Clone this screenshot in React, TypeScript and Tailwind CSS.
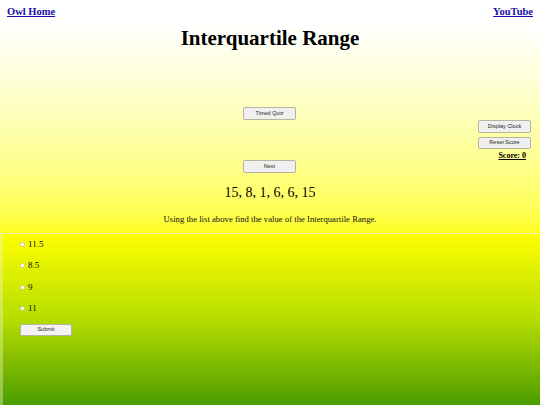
import React from 'react';

const serif = { fontFamily: '"Liberation Serif", "Times New Roman", serif' };

function QuizButton({ label }: { label: string }) {
  return (
    <button className="w-[53px] h-[13px] bg-[#f0f0f0] border border-[#b4b4a0] rounded-[2px] text-[5.5px] leading-none text-[#222] font-['Liberation_Sans',Arial,sans-serif]">
      {label}
    </button>
  );
}

export default function App() {
  const options = ['11.5', '8.5', '9', '11'];

  return (
    <div className="w-[540px] h-[405px] flex flex-col bg-white overflow-hidden" style={serif}>
      {/* Header links */}
      <div className="h-[25px] flex justify-between items-start px-[7px] pt-[7px] bg-white">
        <a href="#" className="text-[10.5px] font-bold underline text-[#1a0dab] leading-none">Owl Home</a>
        <a href="#" className="text-[10.5px] font-bold underline text-[#1a0dab] leading-none">YouTube</a>
      </div>

      {/* Question area */}
      <div className="h-[208px] flex flex-col bg-gradient-to-b from-white to-[#ffff1a]">
        <h1 className="text-[21px] font-bold text-center leading-none mt-[3px] text-black">Interquartile Range</h1>
        <div className="flex justify-center mt-[58px] pr-[1px]">
          <QuizButton label="Timed Quiz" />
        </div>
        <div className="flex justify-end pr-[9px]">
          <div className="flex flex-col items-end gap-[4px] h-[40px]">
            <QuizButton label="Display Clock" />
            <QuizButton label="Reset Score" />
            <span className="text-[8px] font-bold underline leading-none pr-[5px] mt-[-1px]">Score: 0</span>
          </div>
        </div>
        <div className="flex justify-center pr-[1px]">
          <QuizButton label="Next" />
        </div>
        <div className="text-center text-[14px] leading-none mt-[13px] text-black">15, 8, 1, 6, 6, 15</div>
        <p className="text-center text-[8.7px] leading-none mt-[15px] text-[#111]">
          Using the list above find the value of the Interquartile Range.
        </p>
      </div>

      <div className="h-px bg-[#f2f2b8]" />

      {/* Answers */}
      <div className="flex-1 flex flex-col bg-gradient-to-b from-[#ffff00] via-[#b5dd00] to-[#4a9c00] border-l-[3px] border-[#f0f7c0]/40 pl-[17px]">
        {options.map((o) => (
          <label key={o} className="flex items-center h-[21.3px] text-[9px] leading-none text-[#111]">
            <span className="w-[5px] h-[5px] rounded-full bg-white border border-[#c8c8a0] mr-[3px]" />
            {o}
          </label>
        ))}
        <div className="flex mt-[5px]">
          <button className="w-[52px] h-[12px] bg-[#f4f4f4] border border-[#b4b4a0] rounded-[2px] text-[5.5px] leading-none text-[#222] font-['Liberation_Sans',Arial,sans-serif]">
            Submit
          </button>
        </div>
      </div>
    </div>
  );
}
